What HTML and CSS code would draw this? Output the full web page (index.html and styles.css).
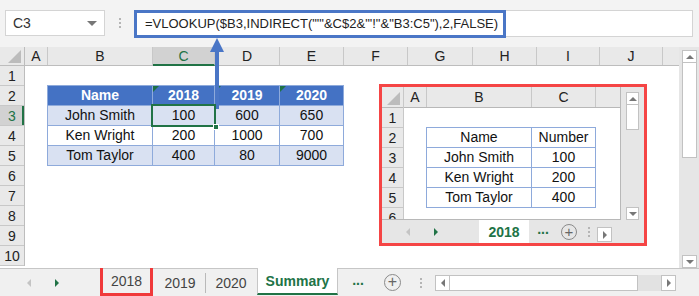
FILE: index.html
```html
<!DOCTYPE html>
<html>
<head>
<meta charset="utf-8">
<link rel="stylesheet" href="styles.css">
</head>
<body>
<div class="app">
  <div class="fbar">
    <div class="namebox"><span>C3</span><span class="dd"></span></div>
    <div class="vdots"><i></i><i></i><i></i></div>
    <div class="finput">
      <div class="fhl">=VLOOKUP($B3,INDIRECT("'"&amp;C$2&amp;"'!"&amp;"B3:C5"),2,FALSE)</div>
    </div>
  </div>

  <div class="main">
    <div class="sheet">
      <div class="colhdr">
        <div class="corner"><span class="tri"></span></div>
        <div class="ch w-a">A</div>
        <div class="ch w-b">B</div>
        <div class="ch w-c sel">C</div>
        <div class="ch w-d">D</div>
        <div class="ch w-e">E</div>
        <div class="ch w-e">F</div>
        <div class="ch w-d">G</div>
        <div class="ch w-e">H</div>
        <div class="ch w-i">I</div>
        <div class="ch w-i">J</div>
        <div class="ch w-k"></div>
      </div>
      <div class="body">
        <div class="rowhdrs">
          <div class="rh">1</div>
          <div class="rh">2</div>
          <div class="rh sel">3</div>
          <div class="rh">4</div>
          <div class="rh">5</div>
          <div class="rh">6</div>
          <div class="rh">7</div>
          <div class="rh">8</div>
          <div class="rh">9</div>
          <div class="rh">10</div>
        </div>
        <div class="cells">
          <div class="tbl">
            <div class="th">Name</div>
            <div class="th tri-g">2018</div>
            <div class="th tri-g">2019</div>
            <div class="th tri-g">2020</div>

            <div class="td band">John Smith</div>
            <div class="td band cur">100<span class="handle"></span></div>
            <div class="td band">600</div>
            <div class="td band">650</div>

            <div class="td">Ken Wright</div>
            <div class="td">200</div>
            <div class="td">1000</div>
            <div class="td">700</div>

            <div class="td band">Tom Taylor</div>
            <div class="td band">400</div>
            <div class="td band">80</div>
            <div class="td band">9000</div>
          </div>
        </div>
      </div>
    </div>
    <div class="vscroll">
      <div class="sbtn up"><span class="t-up"></span></div>
      <div class="thumb"></div>
      <div class="track"></div>
      <div class="sbtn"><span class="t-down"></span></div>
    </div>
  </div>

  <div class="tabbar">
    <div class="navs"><span class="t-left gray"></span><span class="t-right green"></span></div>
    <div class="tab boxed">2018</div>
    <div class="tab">2019</div>
    <div class="tsep"></div>
    <div class="tab">2020</div>
    <div class="tab active">Summary</div>
    <div class="more">...</div>
    <div class="plus">+</div>
    <div class="hdots"><i></i><i></i><i></i></div>
    <div class="hscroll">
      <div class="hbtn"><span class="t-left"></span></div>
      <div class="hthumb"></div>
      <div class="htrack"></div>
      <div class="hbtn"><span class="t-right"></span></div>
    </div>
  </div>

  <svg class="arrow" width="20" height="72" viewBox="0 0 20 72">
    <rect x="8" y="12" width="4" height="60" fill="#4a76c6"/>
    <polygon points="10,1 3,15 17,15" fill="#4a76c6"/>
  </svg>

  <div class="inset">
    <div class="ibody">
      <div class="isheet">
        <div class="icolhdr">
          <div class="corner ic"><span class="tri"></span></div>
          <div class="ich iw-a">A</div>
          <div class="ich iw-b">B</div>
          <div class="ich iw-c">C</div>
          <div class="ich iw-r"></div>
        </div>
        <div class="ibodyrows">
          <div class="irowhdrs">
            <div class="irh">1</div>
            <div class="irh">2</div>
            <div class="irh">3</div>
            <div class="irh">4</div>
            <div class="irh">5</div>
            <div class="irh">6</div>
          </div>
          <div class="icells">
            <div class="itbl">
              <div class="itd">Name</div><div class="itd">Number</div>
              <div class="itd">John Smith</div><div class="itd">100</div>
              <div class="itd">Ken Wright</div><div class="itd">200</div>
              <div class="itd">Tom Taylor</div><div class="itd">400</div>
            </div>
          </div>
        </div>
      </div>
      <div class="ivs">
        <div class="isb">
          <div class="isbtn"><span class="t-up"></span></div>
          <div class="ithumb"></div>
          <div class="itrack"></div>
          <div class="isbtn"><span class="t-down"></span></div>
        </div>
      </div>
    </div>
    <div class="itabs">
      <div class="inavs"><span class="t-left gray"></span><span class="t-right green"></span></div>
      <div class="itab">2018</div>
      <div class="imore">...</div>
      <div class="iplus">+</div>
      <div class="hdots small"><i></i><i></i><i></i></div>
      <div class="ibtn"><span class="t-right"></span></div>
    </div>
  </div>
</div>
</body>
</html>
```

FILE: styles.css
```css
* { box-sizing: border-box; }
html, body { margin: 0; padding: 0; }
body {
  width: 699px;
  height: 296px;
  overflow: hidden;
  font-family: "Liberation Sans", Arial, sans-serif;
  background: #f3f3f3;
  color: #222;
}
.app { position: relative; width: 699px; height: 296px; }

/* formula bar */
.fbar {
  height: 47px;
  display: flex;
  align-items: flex-start;
  padding: 10px 6px 0 5px;
  background: #f3f3f3;
}
.namebox {
  width: 100px;
  height: 26px;
  background: #fff;
  border: 1px solid #d4d4d4;
  display: flex;
  align-items: center;
  justify-content: space-between;
  padding: 0 7px 0 7px;
  font-size: 14px;
  color: #333;
}
.dd {
  width: 0; height: 0;
  border-left: 5px solid transparent;
  border-right: 5px solid transparent;
  border-top: 5px solid #777;
}
.vdots {
  width: 29px;
  height: 26px;
  display: flex;
  flex-direction: column;
  align-items: center;
  justify-content: center;
  gap: 2px;
}
.vdots i, .hdots i { display: block; width: 2px; height: 2px; background: #b5b5b5; }
.finput {
  flex: 1;
  height: 27px;
  background: #fff;
  border: 1px solid #d4d4d4;
  margin-left: 0;
  position: relative;
}
.fhl {
  position: absolute;
  left: -1px; top: -1px;
  width: 372px;
  height: 28px;
  border: 3px solid #4a76c6;
  font-size: 13px;
  line-height: 22px;
  padding-left: 8px;
  color: #222;
  white-space: nowrap;
}

/* main sheet */
.main { display: flex; height: 221px; }
.sheet { width: 679px; background: #fff; }
.colhdr { display: flex; height: 19px; background: #e9e9e9; border-bottom: 1px solid #bdbdbd; }
.corner {
  width: 25px; height: 19px; position: relative;
  border-right: 1px solid #bdbdbd;
}
.tri {
  position: absolute; right: 3px; bottom: 3px;
  width: 0; height: 0;
  border-left: 13px solid transparent;
  border-bottom: 13px solid #bcbcbc;
}
.ch {
  height: 18px;
  border-right: 1px solid #c8c8c8;
  font-size: 14px;
  line-height: 18px;
  text-align: center;
  color: #222;
}
.ch.sel { background: #d2d2d2; color: #217346; border-bottom: 2px solid #217346; height: 19px; }
.w-a { width: 23px; }
.w-b { width: 105px; }
.w-c { width: 62px; }
.w-d { width: 65px; }
.w-e { width: 64px; }
.w-i { width: 63px; }
.w-k { width: 16px; border-right: none; }

.body { display: flex; }
.rowhdrs { width: 25px; background: #e9e9e9; border-right: 1px solid #bdbdbd; }
.rh {
  height: 20px;
  border-bottom: 1px solid #c8c8c8;
  font-size: 14px;
  line-height: 20px;
  text-align: center;
  color: #222;
}
.rh.sel { background: #d2d2d2; color: #217346; box-shadow: inset -2px 0 0 #217346; }
.cells { flex: 1; padding: 19px 0 0 22px; }
.tbl {
  display: grid;
  grid-template-columns: 104px 61px 64px 63px;
  grid-auto-rows: 19px;
  gap: 1px;
  width: 297px;
  padding: 1px;
  background: #8eaadb;
}
.th, .td {
  font-size: 14px;
  text-align: center;
  line-height: 19px;
  position: relative;
}
.th { background: #4472c4; color: #fff; font-weight: bold; }
.td { background: #fff; color: #111; }
.td.band { background: #d9e1f2; }
.tri-g::before {
  content: "";
  position: absolute; left: 0; top: 0;
  border-top: 6px solid #1e7145;
  border-right: 6px solid transparent;
}
.td.cur { box-shadow: 0 0 0 2px #217346; z-index: 1; }
.handle {
  position: absolute; right: -5px; bottom: -5px;
  width: 6px; height: 6px;
  background: #217346; border: 1px solid #fff;
}

/* vertical scrollbar */
.vscroll {
  width: 20px;
  background: #e6e6e6;
  padding: 3px 2px 0 3px;
  display: flex;
  flex-direction: column;
}
.sbtn {
  height: 13px; background: #fff; border: 1px solid #c2c2c2;
  display: flex; align-items: center; justify-content: center;
}
.thumb { height: 95px; background: #fff; border: 1px solid #c2c2c2; border-top: none; }
.track { flex: 1; }
.t-up { width: 0; height: 0; border-left: 4px solid transparent; border-right: 4px solid transparent; border-bottom: 4px solid #777; }
.t-down { width: 0; height: 0; border-left: 4px solid transparent; border-right: 4px solid transparent; border-top: 4px solid #777; }
.t-left { width: 0; height: 0; border-top: 4px solid transparent; border-bottom: 4px solid transparent; border-right: 4px solid #777; }
.t-right { width: 0; height: 0; border-top: 4px solid transparent; border-bottom: 4px solid transparent; border-left: 4px solid #777; }
.t-left.gray { border-right-color: #c4c4c4; }
.t-right.green { border-left-color: #217346; }

/* tab bar */
.tabbar {
  height: 28px;
  display: flex;
  align-items: stretch;
  background: #f0f0f0;
  border-top: 1px solid #c6c6c6;
}
.navs { width: 100px; display: flex; align-items: center; padding-left: 27px; gap: 24px; }
.tab {
  font-size: 14px;
  color: #444;
  display: flex; align-items: center; justify-content: center;
  width: 50px;
}
.tab.boxed { width: 53px; border: 3px solid #f0393a; border-top: none; margin-right: 2px; margin-top: -1px; }
.tsep { width: 1px; background: #b9b9b9; margin: 4px 0 3px; }
.tab.active {
  width: 81px;
  margin-left: 1px;
  background: #fff;
  color: #217346;
  font-weight: bold;
  border-left: 1px solid #c6c6c6;
  border-right: 1px solid #c6c6c6;
  border-bottom: 2px solid #217346;
  margin-top: -1px;
  margin-bottom: 1px;
}
.more { width: 40px; color: #217346; font-weight: bold; font-size: 14px; display: flex; align-items: center; justify-content: center; padding-bottom: 5px; }
.plus {
  width: 17px; height: 17px; margin: 5px 6px 0;
  border: 1px solid #8a8a8a; border-radius: 50%;
  color: #666; font-size: 16px; line-height: 14px; text-align: center;
}
.hdots { width: 28px; display: flex; flex-direction: column; align-items: center; justify-content: center; gap: 2px; }
.hdots.small { width: 16px; }
.hscroll { width: 241px; display: flex; align-items: center; margin-left: 0; height: 16px; margin-top: 6px; }
.hbtn {
  width: 15px; height: 16px; background: #fff; border: 1px solid #c2c2c2;
  display: flex; align-items: center; justify-content: center;
}
.hthumb { width: 188px; height: 16px; background: #fff; border: 1px solid #c2c2c2; border-left: none; }
.htrack { flex: 1; height: 16px; background: #e2e2e2; }

/* arrow annotation */
.arrow { position: absolute; left: 207px; top: 37px; }

/* inset screenshot */
.inset {
  position: absolute;
  left: 379px; top: 84px;
  width: 268px; height: 162px;
  border: 3px solid #f54545;
  background: #e6e6e6;
  display: flex; flex-direction: column;
}
.ibody { display: flex; height: 133px; }
.isheet { width: 239px; background: #fff; border-right: 1px solid #b8b8b8; border-bottom: 1px solid #b8b8b8; overflow: hidden; }
.icolhdr { display: flex; height: 21px; background: #e9e9e9; border-bottom: 1px solid #b8b8b8; }
.corner.ic { width: 22px; height: 21px; border-right: 1px solid #c8c8c8; }
.ich { height: 20px; border-right: 1px solid #c8c8c8; font-size: 14px; line-height: 20px; text-align: center; color: #222; }
.iw-a { width: 23px; }
.iw-b { width: 105px; }
.iw-c { width: 64px; }
.iw-r { flex: 1; border-right: none; }
.ibodyrows { display: flex; }
.irowhdrs { width: 22px; background: #e9e9e9; border-right: 1px solid #c8c8c8; }
.irh { height: 20px; border-bottom: 1px solid #c8c8c8; font-size: 14px; line-height: 20px; text-align: center; color: #222; }
.icells { flex: 1; padding: 19px 0 0 22px; }
.itbl {
  display: grid;
  grid-template-columns: 104px 63px;
  grid-auto-rows: 19px;
  gap: 1px;
  width: 170px;
  padding: 1px;
  background: #8eaadb;
}
.itd { background: #fff; font-size: 14px; line-height: 19px; text-align: center; color: #111; }
.ivs { flex: 1; padding: 5px 5px 0 5px; }
.isb { height: 128px; display: flex; flex-direction: column; }
.isbtn { height: 13px; background: #fff; border: 1px solid #c2c2c2; display: flex; align-items: center; justify-content: center; }
.ithumb { height: 25px; background: #fff; border: 1px solid #c2c2c2; border-top: none; }
.itrack { flex: 1; }
.itabs { flex: 1; display: flex; align-items: stretch; }
.inavs { width: 97px; display: flex; align-items: center; padding-left: 24px; gap: 24px; }
.itab { width: 50px; background: #fff; color: #217346; font-weight: bold; font-size: 14px; display: flex; align-items: center; justify-content: center; }
.imore { width: 28px; color: #217346; font-weight: bold; font-size: 14px; display: flex; align-items: center; justify-content: center; padding-bottom: 5px; }
.iplus {
  width: 16px; height: 16px; margin: 4px 4px 0;
  border: 1px solid #8a8a8a; border-radius: 50%;
  color: #666; font-size: 15px; line-height: 13px; text-align: center;
}
.ibtn {
  width: 15px; height: 15px; margin-top: 7px; background: #fff; border: 1px solid #c2c2c2;
  display: flex; align-items: center; justify-content: center;
}
```
